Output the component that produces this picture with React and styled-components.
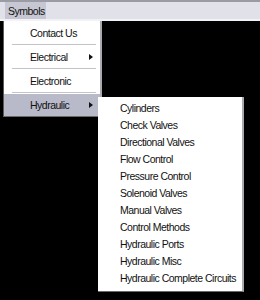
import React from "react";
import styled, { createGlobalStyle } from "styled-components";

const GlobalStyle = createGlobalStyle`
  html, body {
    margin: 0;
    padding: 0;
    background: #000;
    width: 260px;
    height: 300px;
    overflow: hidden;
  }
  body {
    font-family: "Liberation Sans", Arial, sans-serif;
    font-size: 10.5px;
    letter-spacing: -0.5px;
    color: #111;
  }
`;

const MenuBar = styled.div`
  height: 17px;
  padding-left: 5px;
  background: #e0e1e9;
  border-top: 2px solid #9a9ba3;
  border-bottom: 2px solid #f2f2f5;
  display: flex;
  align-items: stretch;
`;

const BarTab = styled.div`
  width: 38px;
  padding-left: 3px;
  background: #c6c7d2;
  display: flex;
  align-items: center;
`;

const Dropdown = styled.div`
  position: relative;
  margin-left: 3px;
  width: 96px;
  background: #fff;
  border-left: 1px solid #5a5a5a;
  border-right: 2px solid #a9a9b0;
  border-bottom: 1px solid #6a6a6a;
  padding-top: 1px;
`;

const Item = styled.div`
  position: relative;
  height: 22px;
  display: flex;
  align-items: center;
  padding-left: 26px;
  background: ${(p) => (p.active ? "#b9bac9" : "transparent")};
`;

const Separator = styled.div`
  height: 1px;
  margin: 0 4px 1px 8px;
  background: #c4c4c8;
`;

const Arrow = styled.span`
  position: absolute;
  right: 7px;
  top: 8px;
  width: 0;
  height: 0;
  border-top: 3px solid transparent;
  border-bottom: 3px solid transparent;
  border-left: 4px solid #111;
`;

const SubMenu = styled.div`
  position: absolute;
  left: 94px;
  top: 3px;
  width: 144px;
  background: #fff;
  border-right: 2px solid #a9a9b0;
  border-bottom: 1px solid #6a6a6a;
  padding: 2px 0 4px;
  display: flex;
  flex-direction: column;
`;

const SubItem = styled.div`
  height: 17.1px;
  display: flex;
  align-items: center;
  padding-left: 22px;
  white-space: nowrap;
`;

const hydraulics = [
  "Cylinders",
  "Check Valves",
  "Directional Valves",
  "Flow Control",
  "Pressure Control",
  "Solenoid Valves",
  "Manual Valves",
  "Control Methods",
  "Hydraulic Ports",
  "Hydraulic Misc",
  "Hydraulic Complete Circuits",
];

export default function App() {
  return (
    <>
      <GlobalStyle />
      <MenuBar>
        <BarTab>Symbols</BarTab>
      </MenuBar>
      <Dropdown>
        <Item>Contact Us</Item>
        <Separator />
        <Item>
          Electrical
          <Arrow />
        </Item>
        <Separator />
        <Item>Electronic</Item>
        <Separator />
        <Item active>
          Hydraulic
          <Arrow />
          <SubMenu>
            {hydraulics.map((h) => (
              <SubItem key={h}>{h}</SubItem>
            ))}
          </SubMenu>
        </Item>
      </Dropdown>
    </>
  );
}
